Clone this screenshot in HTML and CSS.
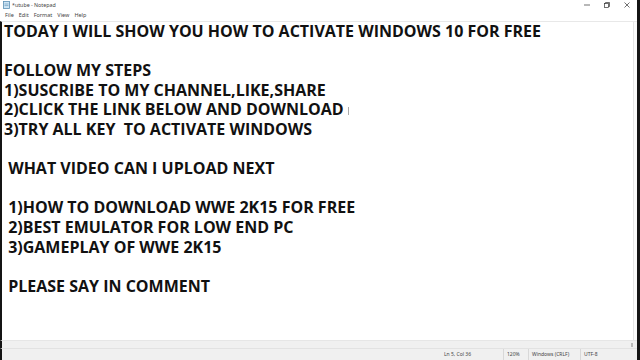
FILE: index.html
```html
<!DOCTYPE html>
<html>
<head>
<meta charset="utf-8">
<link rel="stylesheet" href="styles.css">
</head>
<body>
<div class="window">
  <div class="titlebar">
    <div class="title-left">
      <svg class="app-icon" width="7" height="8" viewBox="0 0 7 8"><rect x="0.5" y="0.5" width="6" height="7" fill="#cfe6f5" stroke="#5a8fb5" stroke-width="0.8"/><line x1="1.5" y1="3" x2="5.5" y2="3" stroke="#5a8fb5" stroke-width="0.6"/><line x1="1.5" y1="4.6" x2="5.5" y2="4.6" stroke="#5a8fb5" stroke-width="0.6"/></svg>
      <span class="title">*utube - Notepad</span>
    </div>
    <div class="controls">
      <span class="ctl"><svg width="6" height="6" viewBox="0 0 6 6"><line x1="0" y1="3" x2="6" y2="3" stroke="#333" stroke-width="0.7"/></svg></span>
      <span class="ctl"><svg width="6" height="6" viewBox="0 0 6 6"><rect x="0.5" y="1.5" width="4" height="4" fill="none" stroke="#333" stroke-width="0.7"/><path d="M1.5 1.5V0.5H5.5V4.5H4.5" fill="none" stroke="#333" stroke-width="0.7"/></svg></span>
      <span class="ctl"><svg width="6" height="6" viewBox="0 0 6 6"><path d="M0.5 0.5L5.5 5.5M5.5 0.5L0.5 5.5" stroke="#333" stroke-width="0.7"/></svg></span>
    </div>
  </div>
  <div class="menubar">
    <span>File</span><span>Edit</span><span>Format</span><span>View</span><span>Help</span>
  </div>
  <div class="editor">
    <div class="text"><div class="line">TODAY I WILL SHOW YOU HOW TO ACTIVATE WINDOWS 10 FOR FREE</div><div class="line"> </div><div class="line">FOLLOW MY STEPS</div><div class="line">1)SUSCRIBE TO MY CHANNEL,LIKE,SHARE</div><div class="line">2)CLICK THE LINK BELOW AND DOWNLOAD <span class="caret"></span></div><div class="line">3)TRY ALL KEY  TO ACTIVATE WINDOWS</div><div class="line"> </div><div class="line"> WHAT VIDEO CAN I UPLOAD NEXT</div><div class="line"> </div><div class="line"> 1)HOW TO DOWNLOAD WWE 2K15 FOR FREE</div><div class="line"> 2)BEST EMULATOR FOR LOW END PC</div><div class="line"> 3)GAMEPLAY OF WWE 2K15</div><div class="line"> </div><div class="line"> PLEASE SAY IN COMMENT</div></div>
    <div class="vscroll"></div>
  </div>
  <div class="hscroll"><span class="grip"></span></div>
  <div class="status">
    <span class="cell pos">Ln 5, Col 36</span>
    <span class="cell zoom">120%</span>
    <span class="cell eol">Windows (CRLF)</span>
    <span class="cell enc">UTF-8</span>
  </div>
</div>
</body>
</html>
```

FILE: styles.css
```css
html, body {
  margin: 0;
  padding: 0;
  background: #ffffff;
}
body {
  width: 640px;
  height: 360px;
  overflow: hidden;
  font-family: "Noto Sans", "Open Sans", sans-serif;
}
.window {
  width: 640px;
  height: 360px;
  box-sizing: border-box;
  border-right: 3px solid #141414;
  display: flex;
  flex-direction: column;
  background: #fff;
}
.titlebar {
  height: 10px;
  display: flex;
  justify-content: space-between;
  align-items: center;
  padding-left: 3px;
}
.title-left {
  display: flex;
  align-items: center;
  gap: 2px;
}
.title {
  font-size: 5.3px;
  color: #444;
  line-height: 10px;
}
.controls {
  display: flex;
  height: 10px;
}
.ctl {
  width: 20px;
  display: flex;
  align-items: center;
  justify-content: center;
}
.menubar {
  height: 11px;
  display: flex;
  gap: 5px;
  padding-left: 5px;
  font-size: 5.5px;
  color: #444;
  line-height: 10px;
}
.editor {
  flex: 1;
  display: flex;
  border-top: 1px solid #e8e8e8;
  border-left: 2px solid #141414;
  min-height: 0;
}
.text {
  flex: 1;
  padding-left: 2px;
  font-family: "Open Sans", "Noto Sans", sans-serif;
  font-weight: 700;
  font-size: 16px;
  line-height: 19.6px;
  color: #111;
  white-space: pre;
}
.line {
  height: 19.6px;
}
.caret {
  display: inline-block;
  width: 1px;
  height: 8px;
  background: #aaa;
  vertical-align: middle;
}
.vscroll {
  width: 3px;
  border-left: 1px solid #e4e4e4;
  background: #fafafa;
}
.hscroll {
  height: 7px;
  background: #f0f0f0;
  border-left: 2px solid #141414;
  border-top: 1px solid #e6e6e6;
  display: flex;
  justify-content: flex-end;
  align-items: center;
}
.grip {
  width: 2px;
  height: 4px;
  background: #bbb;
  margin-right: 4px;
}
.status {
  height: 11px;
  background: #f0f0f0;
  border-left: 2px solid #141414;
  border-top: 1px solid #e2e2e2;
  display: flex;
  padding-left: 439px;
  font-size: 5px;
  color: #444;
  line-height: 10px;
}
.cell {
  border-left: 1px solid #d8d8d8;
  padding-left: 3px;
  box-sizing: border-box;
}
.pos { width: 62px; border-left: none; }
.zoom { width: 25px; }
.eol { width: 52px; }
.enc { width: 40px; }
```
